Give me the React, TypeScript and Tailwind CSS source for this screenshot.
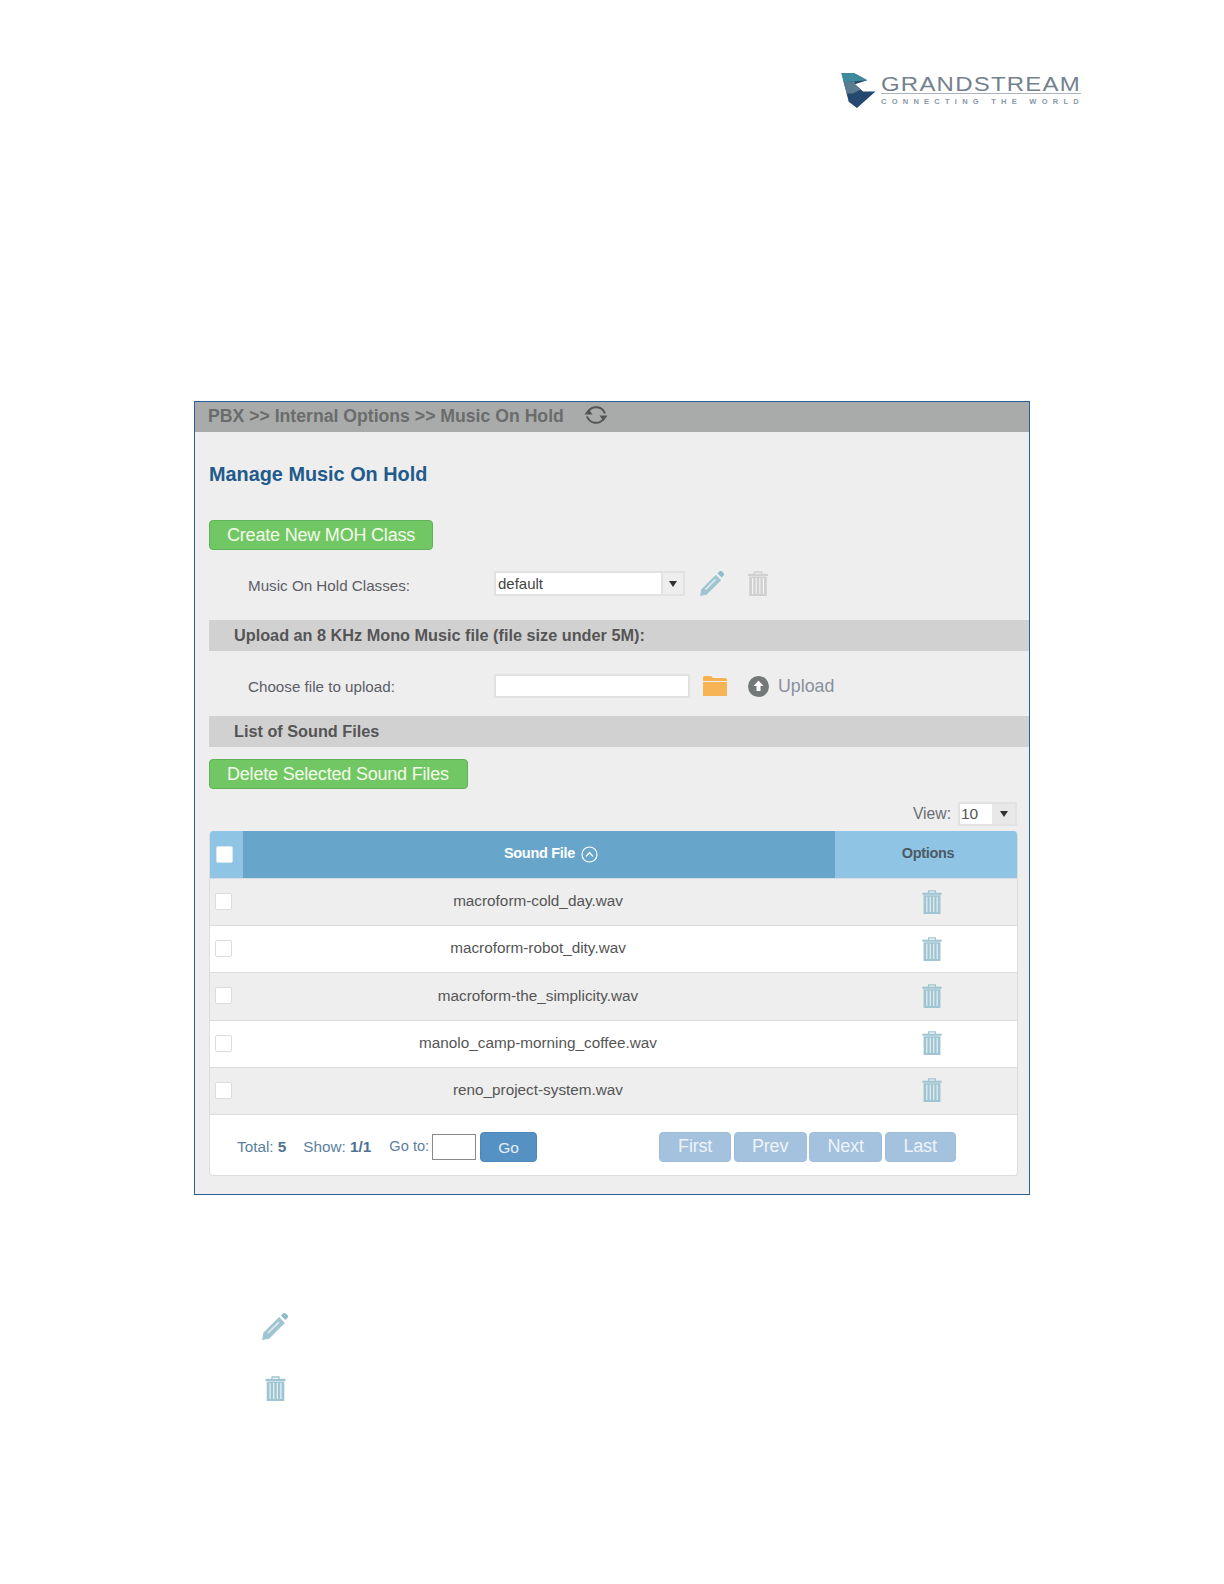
const files = [
  "macroform-cold_day.wav",
  "macroform-robot_dity.wav",
  "macroform-the_simplicity.wav",
  "manolo_camp-morning_coffee.wav",
  "reno_project-system.wav",
];

function Trash({ color = "#9fc5d2", className = "" }: { color?: string; className?: string }) {
  return (
    <svg viewBox="0 0 20 25" className={className} fill="none">
      <path d="M6.5 3V1h7v2" stroke={color} strokeWidth="1.3" />
      <rect x="0" y="2.8" width="20" height="2.2" fill={color} />
      <path d="M1.2 5.5h17.6V25H1.2z" fill={color} />
      <path d="M4.6 7v16M8.2 7v16M11.8 7v16M15.4 7v16" stroke="#ffffff" strokeOpacity="0.75" strokeWidth="1.2" />
    </svg>
  );
}

function Pencil({ className = "" }: { className?: string }) {
  return (
    <svg viewBox="0 0 24 25" className={className}>
      <path d="M0 25l1.200-6.600L15.800 3.800l5.400 5.400L6.600 23.800z" fill="#9fc5d2" />
      <path d="M5.500 18.500L15.500 8.500" stroke="#ffffff" strokeOpacity="0.7" strokeWidth="1.400" />
      <path d="M17.500 2.400l1.800-1.800a2 2 0 0 1 2.800 0l1.300 1.300a2 2 0 0 1 0 2.800L21.600 6.500z" fill="#8dbccb" />
    </svg>
  );
}

function SelectArrow() {
  return <span className="h-0 w-0 border-x-[4px] border-t-[6px] border-x-transparent border-t-[#333333]" />;
}

function Bar({ children }: { children: string }) {
  return (
    <div className="flex h-[31px] items-center bg-[#d1d1d1] pl-[25px] text-[16.25px] font-bold text-[#555555]">
      {children}
    </div>
  );
}

function GreenButton({ children, className }: { children: string; className: string }) {
  return (
    <div className={`flex h-[30px] items-center rounded-[4px] border border-[#5fb257] bg-[#72c765] pl-[17px] text-[18px] tracking-[-0.2px] text-[#f3fbe9] ${className}`}>
      {children}
    </div>
  );
}

function PageButton({ children, className }: { children: string; className: string }) {
  return (
    <div className={`flex h-[30px] items-center justify-center rounded-[4px] border border-[#9dbdd9] bg-[#a4c2de] text-[18px] tracking-[-0.2px] text-[#eef4fa] ${className}`}>
      {children}
    </div>
  );
}

export default function App() {
  return (
    <div className="min-h-[1584px] w-[1224px] bg-white pt-[72px] font-['Liberation_Sans',Arial,sans-serif]">
      {/* Logo */}
      <div className="ml-[841px] flex h-[36px] items-start">
        <svg viewBox="0 0 34 35" className="mt-[1px] h-[36px] w-[36px] shrink-0">
          <path d="M0 0L12 0L25 7L13 11L21 18L33 18L15 34L7 28Z" fill="#23496e" />
          <path d="M0 0L12 0L25 7L13 8L2 9Z" fill="#3d8b9c" />
          <path d="M2 9L13 8L13 11L19 16L11 20L5 20Z" fill="#5c7a90" />
        </svg>
        <div className="ml-[4px] w-[200px]">
          <div className="h-[21px] origin-left scale-x-[1.2] whitespace-nowrap pt-[2px] text-[20px] leading-[21px] tracking-[1px] text-[#74818f]">GRANDSTREAM</div>
          <div className="h-[1px] bg-[#a9b4c0]" />
          <div className="mt-[3px] whitespace-nowrap text-[7.5px] font-bold leading-[9px] tracking-[5.25px] text-[#8a97a5]">CONNECTING THE WORLD</div>
        </div>
      </div>

      {/* Panel */}
      <div className="ml-[194px] mt-[293px] h-[794px] w-[836px] border border-[#2c5f9a] bg-[#eeeeee]">
        <div className="flex h-[30px] items-center bg-[#a9abaa] pb-[2px] pl-[13px] text-[17.65px] font-bold text-[#6a6c6c]">
          <span>PBX &gt;&gt; Internal Options &gt;&gt; Music On Hold</span>
          <svg viewBox="0 0 24 24" className="mb-[3px] ml-[20px] h-[24px] w-[24px]" fill="none" stroke="#555555" strokeWidth="2">
            <path d="M4.500 8A9.500 9.500 0 0 1 21 10.500" />
            <path d="M19.500 16A9.500 9.500 0 0 1 3 13.500" />
            <path d="M0.500 11.500h8l-4-5.500z" fill="#555555" stroke="none" />
            <path d="M15.500 12.500h8l-4 5.500z" fill="#555555" stroke="none" />
          </svg>
        </div>

        <div className="pl-[14px]">
          <h1 className="mt-[29px] flex h-[27px] items-center text-[19.85px] font-bold text-[#225a8b]">Manage Music On Hold</h1>
          <GreenButton className="mt-[32px] w-[224px]">Create New MOH Class</GreenButton>

          <div className="mt-[21px] flex h-[25px] items-center pl-[39px]">
            <span className="w-[246px] pt-[5px] text-[15.2px] text-[#5d5d66]">Music On Hold Classes:</span>
            <div className="flex h-[25px] w-[191px] border-2 border-[#e2e2e2] bg-white">
              <span className="flex-1 pl-[2px] text-[15px] leading-[21px] text-[#444444]">default</span>
              <span className="flex w-[22px] items-center justify-center border-l-2 border-[#e2e2e2] bg-[#eeeeee]">
                <SelectArrow />
              </span>
            </div>
            <Pencil className="ml-[15px] h-[25px] w-[24px]" />
            <Trash color="#d0d0d0" className="ml-[24px] h-[25px] w-[20px]" />
          </div>

          <div className="mt-[24px]"><Bar>Upload an 8 KHz Mono Music file (file size under 5M):</Bar></div>

          <div className="mt-[23px] flex h-[24px] items-center pl-[39px]">
            <span className="w-[246px] pt-[2px] text-[15.2px] text-[#5d5d66]">Choose file to upload:</span>
            <div className="h-[24px] w-[196px] border-2 border-[#e2e2e2] bg-white" />
            <svg viewBox="0 0 24 20" className="ml-[13px] h-[20px] w-[24px]">
              <path d="M0 2a2 2 0 0 1 2-2h6l2 2h12a2 2 0 0 1 2 2v1H0z" fill="#f6b04f" />
              <rect x="0" y="6" width="24" height="14" fill="#f6b455" />
            </svg>
            <svg viewBox="0 0 21 21" className="ml-[21px] h-[21px] w-[21px]">
              <circle cx="10.500" cy="10.500" r="10.500" fill="#737878" />
              <path d="M10.500 4.500l5 5.500h-3v5h-4v-5h-3z" fill="#ffffff" />
            </svg>
            <span className="ml-[9px] text-[17.8px] text-[#8a919c]">Upload</span>
          </div>

          <div className="mt-[18px]"><Bar>List of Sound Files</Bar></div>

          <GreenButton className="mt-[12px] w-[259px]">Delete Selected Sound Files</GreenButton>

          <div className="mr-[12px] mt-[13px] flex h-[24px] items-center justify-end">
            <span className="mr-[7px] text-[15.7px] text-[#6a6d72]">View:</span>
            <div className="flex h-[24px] w-[59px] border-2 border-[#e2e2e2] bg-white">
              <span className="flex-1 pl-[1px] text-[15.5px] leading-[20px] text-[#555555]">10</span>
              <span className="flex w-[23px] items-center justify-center bg-[#e8e8e8]">
                <SelectArrow />
              </span>
            </div>
          </div>

          {/* Table */}
          <div className="mt-[5px] h-[345px] w-[809px] overflow-hidden rounded-[4px] border border-t-0 border-[#dddddd] bg-white">
            <div className="flex h-[48px] border-b border-[#d4dde3]">
              <div className="flex w-[33px] items-center bg-[#90c4e4] pb-[1px] pl-[6px]">
                <span className="h-[17px] w-[17px] rounded-[2px] border border-[#d8e6ef] bg-white" />
              </div>
              <div className="flex flex-1 items-center justify-center gap-[6px] bg-[#67a5ca] pb-[1px] pl-[24px] text-[14.5px] font-bold tracking-[-0.3px] text-white">
                <span>Sound File</span>
                <svg viewBox="0 0 17 17" className="h-[17px] w-[17px]" fill="none" stroke="#ffffff" strokeWidth="1.200">
                  <circle cx="8.500" cy="8.500" r="7.500" />
                  <path d="M5 10.500l3.500-4 3.500 4" />
                </svg>
              </div>
              <div className="flex w-[182px] items-center justify-center bg-[#90c4e4] pb-[1px] pl-[4px] text-[14.5px] font-bold tracking-[-0.3px] text-[#4b5a66]">
                Options
              </div>
            </div>
            {files.map((f, i) => (
              <div
                key={f}
                className={`flex h-[47.2px] items-center border-b border-[#dcdcdc] pb-[1px] ${i % 2 === 0 ? "bg-[#eeeeee]" : "bg-white"}`}
              >
                <div className="w-[33px] pl-[5px]">
                  <span className="block h-[17px] w-[17px] rounded-[2px] border border-[#dcdcdc] bg-white" />
                </div>
                <div className="flex-1 pr-[2px] text-center text-[15.3px] text-[#555555]">{f}</div>
                <div className="flex w-[182px] justify-center pl-[12px]">
                  <Trash className="h-[24px] w-[20px]" />
                </div>
              </div>
            ))}
            <div className="flex items-start pl-[27px]">
              <div className="mt-[18px] flex h-[29px] items-center text-[15.3px] text-[#5a7fa0]">
                <span>Total: <b className="text-[#4d7291]">5</b></span>
                <span className="ml-[17px]">Show: <b className="text-[#4d7291]">1/1</b></span>
                <span className="ml-[18px] text-[14.6px]">Go to:</span>
                <span className="ml-[3px] h-[26px] w-[44px] border border-[#888888] bg-white" />
                <span className="ml-[4px] flex h-[30px] w-[57px] items-center justify-center rounded-[4px] border border-[#4d86b8] bg-[#5591c2] text-[15.5px] text-[#e6f0f8]">Go</span>
              </div>
              <div className="ml-[122px] mt-[17px] flex gap-[2.500px]">
                <PageButton className="w-[72px]">First</PageButton>
                <PageButton className="w-[73px]">Prev</PageButton>
                <PageButton className="w-[73px]">Next</PageButton>
                <PageButton className="w-[71px]">Last</PageButton>
              </div>
            </div>
          </div>
        </div>
      </div>

      {/* Legend icons */}
      <div className="ml-[262px] mt-[118px]">
        <Pencil className="h-[27px] w-[26px]" />
        <Trash className="ml-[3px] mt-[36px] h-[25px] w-[21px]" />
      </div>
    </div>
  );
}
